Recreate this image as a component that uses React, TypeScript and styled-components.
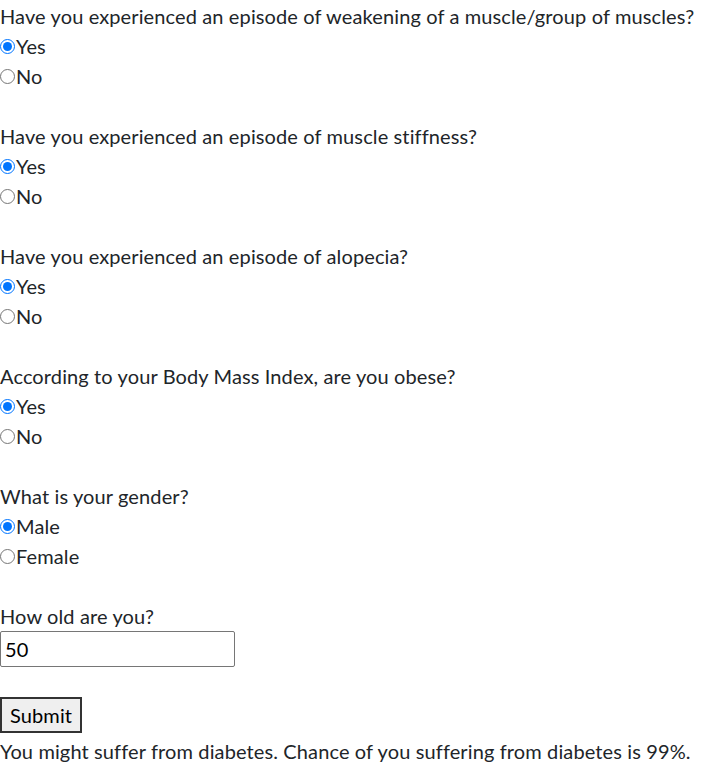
import React, { useState } from 'react'
import styled, { createGlobalStyle } from 'styled-components'

const GlobalStyle = createGlobalStyle`
  html, body {
    margin: 0;
    padding: 0;
    background: #ffffff;
  }
  body {
    font-family: Lato, "Open Sans", sans-serif;
    font-size: 20px;
    line-height: 30px;
    letter-spacing: 0.12px;
    color: #212529;
  }
`

const Form = styled.form`
  display: flex;
  flex-direction: column;
  width: 705px;
  padding-top: 1px;
`

const Question = styled.div`
  display: flex;
  flex-direction: column;
  margin-bottom: 30px;
`

const Label = styled.div`
  height: 30px;
  white-space: nowrap;
`

const Option = styled.label`
  display: flex;
  align-items: center;
  height: 30px;
`

const Radio = styled.input`
  width: 15px;
  height: 15px;
  margin: 0 1px 0 0;
  accent-color: #0075ff;
`

const AgeInput = styled.input`
  box-sizing: border-box;
  width: 235px;
  height: 36px;
  margin: 0;
  padding: 1px 4px;
  border: 1px solid #767676;
  border-radius: 2px;
  font-family: inherit;
  font-size: 20px;
  letter-spacing: inherit;
  color: #000;
`

const SubmitButton = styled.button`
  align-self: flex-start;
  box-sizing: border-box;
  height: 36px;
  padding: 0 8px;
  margin: 0;
  border: 2px solid #333333;
  background: #efefef;
  font-family: inherit;
  font-size: 20px;
  letter-spacing: inherit;
  color: #000;
`

const Result = styled.div`
  height: 30px;
  margin-top: 3px;
  white-space: nowrap;
`

interface Q {
  key: string;
  text: string;
  options: string[];
}

const questions: Q[] = [
  { key: 'weak', text: 'Have you experienced an episode of weakening of a muscle/group of muscles?', options: ['Yes', 'No'] },
  { key: 'stiff', text: 'Have you experienced an episode of muscle stiffness?', options: ['Yes', 'No'] },
  { key: 'alopecia', text: 'Have you experienced an episode of alopecia?', options: ['Yes', 'No'] },
  { key: 'obese', text: 'According to your Body Mass Index, are you obese?', options: ['Yes', 'No'] },
  { key: 'gender', text: 'What is your gender?', options: ['Male', 'Female'] },
]

const App = () => {
  const [answers, setAnswers] = useState<Record<string, string>>({
    weak: 'Yes',
    stiff: 'Yes',
    alopecia: 'Yes',
    obese: 'Yes',
    gender: 'Male',
  })
  const [age, setAge] = useState('50')

  return (
    <>
      <GlobalStyle />
      <Form onSubmit={(e) => e.preventDefault()}>
        {questions.map((q) => (
          <Question key={q.key}>
            <Label>{q.text}</Label>
            {q.options.map((opt) => (
              <Option key={opt}>
                <Radio
                  type='radio'
                  name={q.key}
                  checked={answers[q.key] === opt}
                  onChange={() => setAnswers({ ...answers, [q.key]: opt })}
                />
                {opt}
              </Option>
            ))}
          </Question>
        ))}
        <Question>
          <Label>How old are you?</Label>
          <AgeInput type='text' value={age} onChange={(e) => setAge(e.target.value)} />
        </Question>
        <SubmitButton type='submit'>Submit</SubmitButton>
        <Result>You might suffer from diabetes. Chance of you suffering from diabetes is 99%.</Result>
      </Form>
    </>
  )
}

export default App
